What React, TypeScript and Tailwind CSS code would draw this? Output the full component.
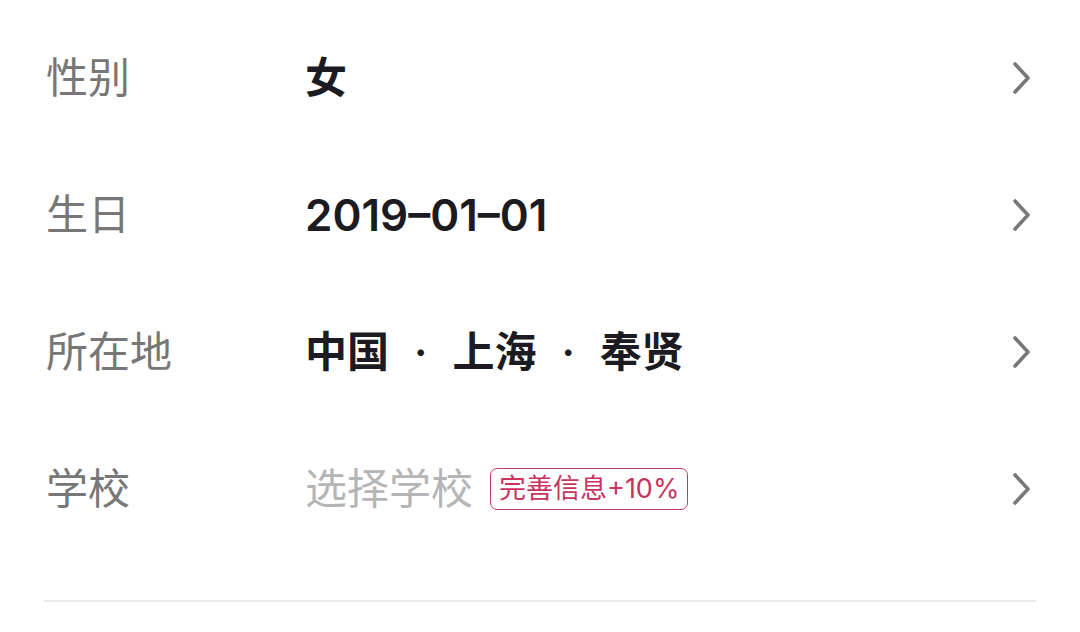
import React from 'react';

interface Row {
  label: string;
  value: React.ReactNode;
}

function Chevron() {
  return (
    <svg width="22" height="34" viewBox="0 0 22 34" className="shrink-0">
      <polyline
        points="4,3 17,17 4,31"
        fill="none"
        stroke="#787878"
        strokeWidth="3.6"
        strokeLinecap="round"
        strokeLinejoin="round"
      />
    </svg>
  );
}

export default function App() {
  const rows: Row[] = [
    { label: '性别', value: <span className="font-semibold text-[#1c1b21]">女</span> },
    {
      label: '生日',
      value: <span className="font-semibold text-[#1c1b21] text-[44px]">2019–01–01</span>,
    },
    {
      label: '所在地',
      value: (
        <span className="font-semibold text-[#1c1b21] flex items-center">
          中国<span className="mx-[25px]">·</span>上海<span className="mx-[25px]">·</span>奉贤
        </span>
      ),
    },
    {
      label: '学校',
      value: (
        <span className="flex items-center">
          <span className="text-[#b5b5b5]">选择学校</span>
          <span className="ml-[17px] h-[42px] px-[8px] flex items-center border-[1.5px] border-[#c83a62] rounded-[7px] text-[#c8345e] text-[27px] leading-none">
            完善信息+10%
          </span>
        </span>
      ),
    },
  ];

  return (
    <div
      className="w-[1080px] h-[632px] bg-white overflow-hidden pt-[9px] px-[44px]"
      style={{ fontFamily: 'Inter, "Noto Sans CJK SC", sans-serif' }}
    >
      {rows.map((row) => (
        <div key={row.label} className="h-[137px] flex items-center pl-[2px]">
          <div className="w-[259px] text-[42px] text-[#777777] leading-none">{row.label}</div>
          <div className="flex-1 text-[42px] leading-none">{row.value}</div>
          <div className="pr-[3px]">
            <Chevron />
          </div>
        </div>
      ))}
      <div className="mt-[43px] h-[2px] bg-[#ebebeb]" />
    </div>
  );
}
